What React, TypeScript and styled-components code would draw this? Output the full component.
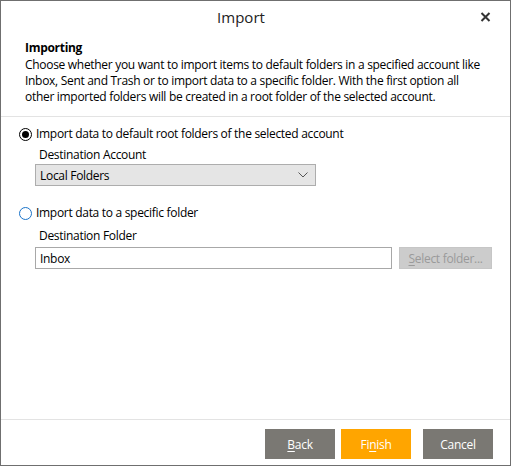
import React from 'react';
import styled, { createGlobalStyle } from 'styled-components';

const GlobalStyle = createGlobalStyle`
  html, body {
    margin: 0;
    padding: 0;
    background: #ffffff;
  }
  body {
    font-family: "Open Sans", "Noto Sans", "Liberation Sans", sans-serif;
    letter-spacing: -0.3px;
    color: #000000;
  }
`;

const Window = styled.div`
  width: 511px;
  height: 466px;
  box-sizing: border-box;
  border: 1px solid #6f6f6f;
  background: #ffffff;
  display: flex;
  flex-direction: column;
`;

const TitleBar = styled.div`
  height: 31px;
  display: grid;
  grid-template-columns: 1fr 30px;
  align-items: center;
`;

const Title = styled.div`
  text-align: center;
  font-size: 15px;
  letter-spacing: 0;
  color: #222222;
  padding-left: 1px;
`;

const CloseButton = styled.div`
  display: flex;
  align-items: center;
  justify-content: flex-start;
  height: 100%;
`;

const Header = styled.div`
  padding: 7px 24px 11px 24px;
  border-bottom: 1px solid #e3e3e3;
`;

const HeaderTitle = styled.div`
  font-size: 12px;
  font-weight: 700;
  line-height: 17px;
`;

const Description = styled.div`
  font-size: 12px;
  line-height: 16px;
  white-space: nowrap;
  margin-top: 1px;
`;

const Body = styled.div`
  flex: 1;
  padding: 8px 18px 0 18px;
  display: flex;
  flex-direction: column;
`;

const OptionGroup = styled.div<{ $gap?: number }>`
  display: flex;
  flex-direction: column;
  margin-bottom: ${(p) => p.$gap ?? 0}px;
`;

const RadioRow = styled.label`
  display: flex;
  align-items: center;
  gap: 4px;
  font-size: 12px;
  line-height: 18px;
  height: 18px;
`;

const RadioCircle = styled.span<{ $checked?: boolean }>`
  width: 11px;
  height: 11px;
  border-radius: 50%;
  border: 1px solid ${(p) => (p.$checked ? '#000000' : '#1a73c9')};
  background: #ffffff;
  display: flex;
  align-items: center;
  justify-content: center;
  flex-shrink: 0;

  &::after {
    content: '';
    width: 7px;
    height: 7px;
    border-radius: 50%;
    background: ${(p) => (p.$checked ? '#000000' : 'transparent')};
  }
`;

const Indent = styled.div`
  padding-left: 16px;
  display: flex;
  flex-direction: column;
`;

const FieldLabel = styled.div<{ $top?: number }>`
  font-size: 12px;
  line-height: 16px;
  padding: ${(p) => p.$top ?? 4}px 0 ${(p) => (p.$top ?? 4) - 3}px 4px;
`;

const FieldRow = styled.div`
  display: flex;
  gap: 7px;
`;

const SelectBox = styled.div`
  width: 281px;
  height: 22px;
  box-sizing: border-box;
  background: #e5e5e5;
  border: 1px solid #adadad;
  display: flex;
  align-items: center;
  justify-content: space-between;
  padding: 0 7px 0 4px;
  font-size: 12px;
`;

const TextInput = styled.div`
  width: 358px;
  height: 22px;
  box-sizing: border-box;
  border: 1px solid #a8a8a8;
  display: flex;
  align-items: center;
  padding: 0 4px;
  font-size: 12px;
`;

const SideButton = styled.div`
  width: 93px;
  height: 22px;
  box-sizing: border-box;
  background: #cccccc;
  border: 1px solid #c6c6c6;
  color: #9a9a9a;
  font-size: 12px;
  display: flex;
  align-items: center;
  justify-content: center;
`;

const Footer = styled.div`
  border-top: 1px solid #e3e3e3;
  height: 46px;
  box-sizing: border-box;
  padding: 9px 17px 0 0;
  display: flex;
  justify-content: flex-end;
  align-items: flex-start;
`;

const Button = styled.div<{ $primary?: boolean; $space?: number }>`
  width: 70px;
  height: 30px;
  background: ${(p) => (p.$primary ? '#ffa500' : '#7a7873')};
  color: #ffffff;
  font-size: 12px;
  display: flex;
  align-items: center;
  justify-content: center;
  margin-left: ${(p) => p.$space ?? 0}px;
`;

const Key = styled.span`
  text-decoration: underline;
  text-underline-offset: 2px;
`;

const App: React.FC = () => {
  return (
    <>
      <GlobalStyle />
      <Window>
        <TitleBar>
          <Title>Import</Title>
          <CloseButton>
            <svg width="11" height="10" viewBox="0 0 11 10">
              <path d="M1.5 1 L9.5 9 M9.5 1 L1.5 9" stroke="#333333" strokeWidth="2" />
            </svg>
          </CloseButton>
        </TitleBar>

        <Header>
          <HeaderTitle>Importing</HeaderTitle>
          <Description>
            Choose whether you want to import items to default folders in a specified account like
            <br />
            Inbox, Sent and Trash or to import data to a specific folder. With the first option all
            <br />
            other imported folders will be created in a root folder of the selected account.
          </Description>
        </Header>

        <Body>
          <OptionGroup $gap={18}>
            <RadioRow>
              <RadioCircle $checked />
              Import data to default root folders of the selected account
            </RadioRow>
            <Indent>
              <FieldLabel>Destination Account</FieldLabel>
              <SelectBox>
                <span>Local Folders</span>
                <svg width="10" height="6" viewBox="0 0 10 6">
                  <path d="M0.5 0.5 L5 5 L9.5 0.5" fill="none" stroke="#555555" strokeWidth="1" />
                </svg>
              </SelectBox>
            </Indent>
          </OptionGroup>

          <OptionGroup>
            <RadioRow>
              <RadioCircle />
              Import data to a specific folder
            </RadioRow>
            <Indent>
              <FieldLabel $top={6}>Destination Folder</FieldLabel>
              <FieldRow>
                <TextInput>Inbox</TextInput>
                <SideButton>
                  <span>
                    <Key>S</Key>elect folder...
                  </span>
                </SideButton>
              </FieldRow>
            </Indent>
          </OptionGroup>
        </Body>

        <Footer>
          <Button>
            <span>
              <Key>B</Key>ack
            </span>
          </Button>
          <Button $primary $space={6}>
            <span>
              Fi<Key>n</Key>ish
            </span>
          </Button>
          <Button $space={12}>Cancel</Button>
        </Footer>
      </Window>
    </>
  );
};

export default App;
